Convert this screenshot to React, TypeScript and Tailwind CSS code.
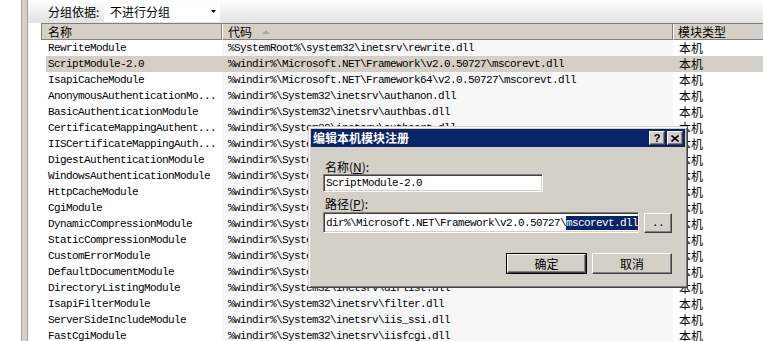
import React from 'react';

const mono = "font-['Liberation_Mono','Noto_Sans_CJK_SC',monospace] text-[11px] tracking-[-0.6px]";
const cjk = "font-['Noto_Sans_CJK_SC','Liberation_Sans',sans-serif] text-[12px] leading-[16px]";

const raised =
  'border border-t-white border-l-white border-r-[#404040] border-b-[#404040] shadow-[inset_-1px_-1px_0_#808080] bg-[#d4d0c8]';
const sunken =
  'border border-t-[#808080] border-l-[#808080] border-r-white border-b-white shadow-[inset_1px_1px_0_#404040,inset_-1px_-1px_0_#d4d0c8] bg-white';

const rows = [
  { name: 'RewriteModule', code: '%SystemRoot%\\system32\\inetsrv\\rewrite.dll' },
  { name: 'ScriptModule-2.0', code: '%windir%\\Microsoft.NET\\Framework\\v2.0.50727\\mscorevt.dll', sel: true },
  { name: 'IsapiCacheModule', code: '%windir%\\Microsoft.NET\\Framework64\\v2.0.50727\\mscorevt.dll' },
  { name: 'AnonymousAuthenticationMo...', code: '%windir%\\System32\\inetsrv\\authanon.dll' },
  { name: 'BasicAuthenticationModule', code: '%windir%\\System32\\inetsrv\\authbas.dll' },
  { name: 'CertificateMappingAuthent...', code: '%windir%\\System32\\inetsrv\\authcert.dll' },
  { name: 'IISCertificateMappingAuth...', code: '%windir%\\System32\\inetsrv\\authmap.dll' },
  { name: 'DigestAuthenticationModule', code: '%windir%\\System32\\inetsrv\\authmd5.dll' },
  { name: 'WindowsAuthenticationModule', code: '%windir%\\System32\\inetsrv\\authsspi.dll' },
  { name: 'HttpCacheModule', code: '%windir%\\System32\\inetsrv\\cachhttp.dll' },
  { name: 'CgiModule', code: '%windir%\\System32\\inetsrv\\cgi.dll' },
  { name: 'DynamicCompressionModule', code: '%windir%\\System32\\inetsrv\\compdyn.dll' },
  { name: 'StaticCompressionModule', code: '%windir%\\System32\\inetsrv\\compstat.dll' },
  { name: 'CustomErrorModule', code: '%windir%\\System32\\inetsrv\\custerr.dll' },
  { name: 'DefaultDocumentModule', code: '%windir%\\System32\\inetsrv\\defdoc.dll' },
  { name: 'DirectoryListingModule', code: '%windir%\\System32\\inetsrv\\dirlist.dll' },
  { name: 'IsapiFilterModule', code: '%windir%\\System32\\inetsrv\\filter.dll' },
  { name: 'ServerSideIncludeModule', code: '%windir%\\System32\\inetsrv\\iis_ssi.dll' },
  { name: 'FastCgiModule', code: '%windir%\\System32\\inetsrv\\iisfcgi.dll' },
];

function EditDialog() {
  return (
    <div className="absolute left-[308px] top-[126px] flex h-[162px] w-[380px] flex-col border border-t-[#d4d0c8] border-l-[#d4d0c8] border-r-[#404040] border-b-[#404040] bg-[#d4d0c8] p-[2px] shadow-[inset_1px_1px_0_#fff,inset_-1px_-1px_0_#808080]">
      {/* title bar */}
      <div className="flex h-[18px] shrink-0 items-center bg-[#0a246a] pl-[2px] pr-[2px]">
        <span className="flex-1 font-['Noto_Sans_CJK_SC',sans-serif] text-[12px] font-bold leading-[16px] text-white">
          编辑本机模块注册
        </span>
        <div className={`flex h-[14px] w-[16px] items-center justify-center ${raised}`}>
          <span className="font-['Liberation_Sans',sans-serif] text-[11px] font-bold leading-none">?</span>
        </div>
        <div className={`ml-[2px] flex h-[14px] w-[16px] items-center justify-center ${raised}`}>
          <svg width="8" height="7" viewBox="0 0 8 7">
            <path d="M0.5 0.5 L7.5 6.5 M7.5 0.5 L0.5 6.5" stroke="#000" strokeWidth="1.6" />
          </svg>
        </div>
      </div>

      {/* body */}
      <div className="flex flex-col pl-[12px] pr-[13px]">
        <div className={`ml-[2px] mt-[12px] h-[16px] ${cjk}`}>
          名称(<span className="underline">N</span>):
        </div>
        <div className={`mt-[-1px] flex h-[18px] w-[220px] items-center pl-[2px] ${sunken}`}>
          <span className={`${mono} leading-[14px]`}>ScriptModule-2.0</span>
        </div>
        <div className={`ml-[2px] mt-[4px] h-[16px] ${cjk}`}>
          路径(<span className="underline">P</span>):
        </div>
        <div className="flex">
          <div className={`flex h-[21px] w-[317px] items-center overflow-hidden whitespace-nowrap pl-[2px] ${sunken}`}>
            <span className={`${mono} leading-[14px]`}>dir%\Microsoft.NET\Framework\v2.0.50727\</span>
            <span className={`${mono} bg-[#0a246a] leading-[14px] text-white`}>mscorevt.dll</span>
          </div>
          <div className={`ml-[5px] mt-[1px] flex h-[20px] w-[28px] items-center justify-center ${raised}`}>
            <span className={`${mono} leading-none`}>..</span>
          </div>
        </div>
        <div className="mt-[20px] flex justify-end gap-[5px]">
          <div className="h-[21px] w-[81px] border border-black">
            <div className={`flex h-full w-full items-center justify-center ${raised}`}>
              <span className={cjk}>确定</span>
            </div>
          </div>
          <div className={`flex h-[21px] w-[80px] items-center justify-center ${raised}`}>
            <span className={cjk}>取消</span>
          </div>
        </div>
      </div>
    </div>
  );
}

export default function App() {
  return (
    <div className="relative flex h-[341px] w-[763px] overflow-hidden bg-white text-black">
      <div className="w-[21px] shrink-0 bg-white" />
      <div className="w-[7px] shrink-0 border-x border-[#a0a0a0] bg-[#d4d0c8]" />

      <div className="flex min-w-0 flex-1 flex-col">
        {/* group by bar */}
        <div className="flex h-[23px] shrink-0 items-center bg-linear-to-b from-white to-[#e2e2e2] pl-[20px]">
          <span className={`w-[56px] ${cjk}`}>分组依据:</span>
          <div className="flex h-[20px] w-[116px] items-center bg-white pl-[6px] pr-[4px]">
            <span className={`flex-1 ${cjk}`}>不进行分组</span>
            <svg width="5" height="3" viewBox="0 0 5 3">
              <path d="M0 0 H5 L2.5 3 Z" fill="#000" />
            </svg>
          </div>
        </div>

        <div className="flex min-h-0 flex-1">
          <div className="w-[13px] shrink-0" />
          <div className="flex min-w-0 flex-1 flex-col">
            {/* column header */}
            <div className="flex h-[17px] shrink-0 border-t border-[#808080] bg-[#d4d0c8]">
              <div className={`w-[181px] shrink-0 border-x border-b border-[#808080] pl-[6px] ${cjk} leading-[15px]`}>
                名称
              </div>
              <div className={`flex w-[451px] shrink-0 items-center border-l border-l-white border-r border-r-[#808080] border-b border-b-[#808080] pl-[5px] ${cjk} leading-[15px]`}>
                代码
                <svg className="ml-[10px]" width="8" height="4" viewBox="0 0 8 4">
                  <path d="M0 4 L4 0 L8 4 Z" fill="#a8a8a8" />
                </svg>
              </div>
              <div className={`flex-1 border-l border-l-white border-b border-b-[#808080] pl-[4px] ${cjk} leading-[15px]`}>
                模块类型
              </div>
            </div>

            {/* rows */}
            {rows.map((r) => (
              <div key={r.name} className="flex h-[16px] shrink-0">
                <div className="w-[181px] shrink-0 pl-[5px]">
                  <div className={`h-full whitespace-nowrap pl-[2px] ${mono} leading-[16px] ${r.sel ? 'bg-[#d4d0c8]' : ''}`}>
                    {r.name}
                  </div>
                </div>
                <div className={`w-[451px] shrink-0 whitespace-nowrap pl-[6px] ${mono} leading-[16px] ${r.sel ? 'bg-[#d4d0c8]' : 'bg-[#f7f7f7]'}`}>
                  {r.code}
                </div>
                <div className={`flex-1 pl-[6px] ${cjk} ${r.sel ? 'bg-[#d4d0c8]' : ''}`}>本机</div>
              </div>
            ))}
          </div>
        </div>
      </div>

      <EditDialog />
    </div>
  );
}
